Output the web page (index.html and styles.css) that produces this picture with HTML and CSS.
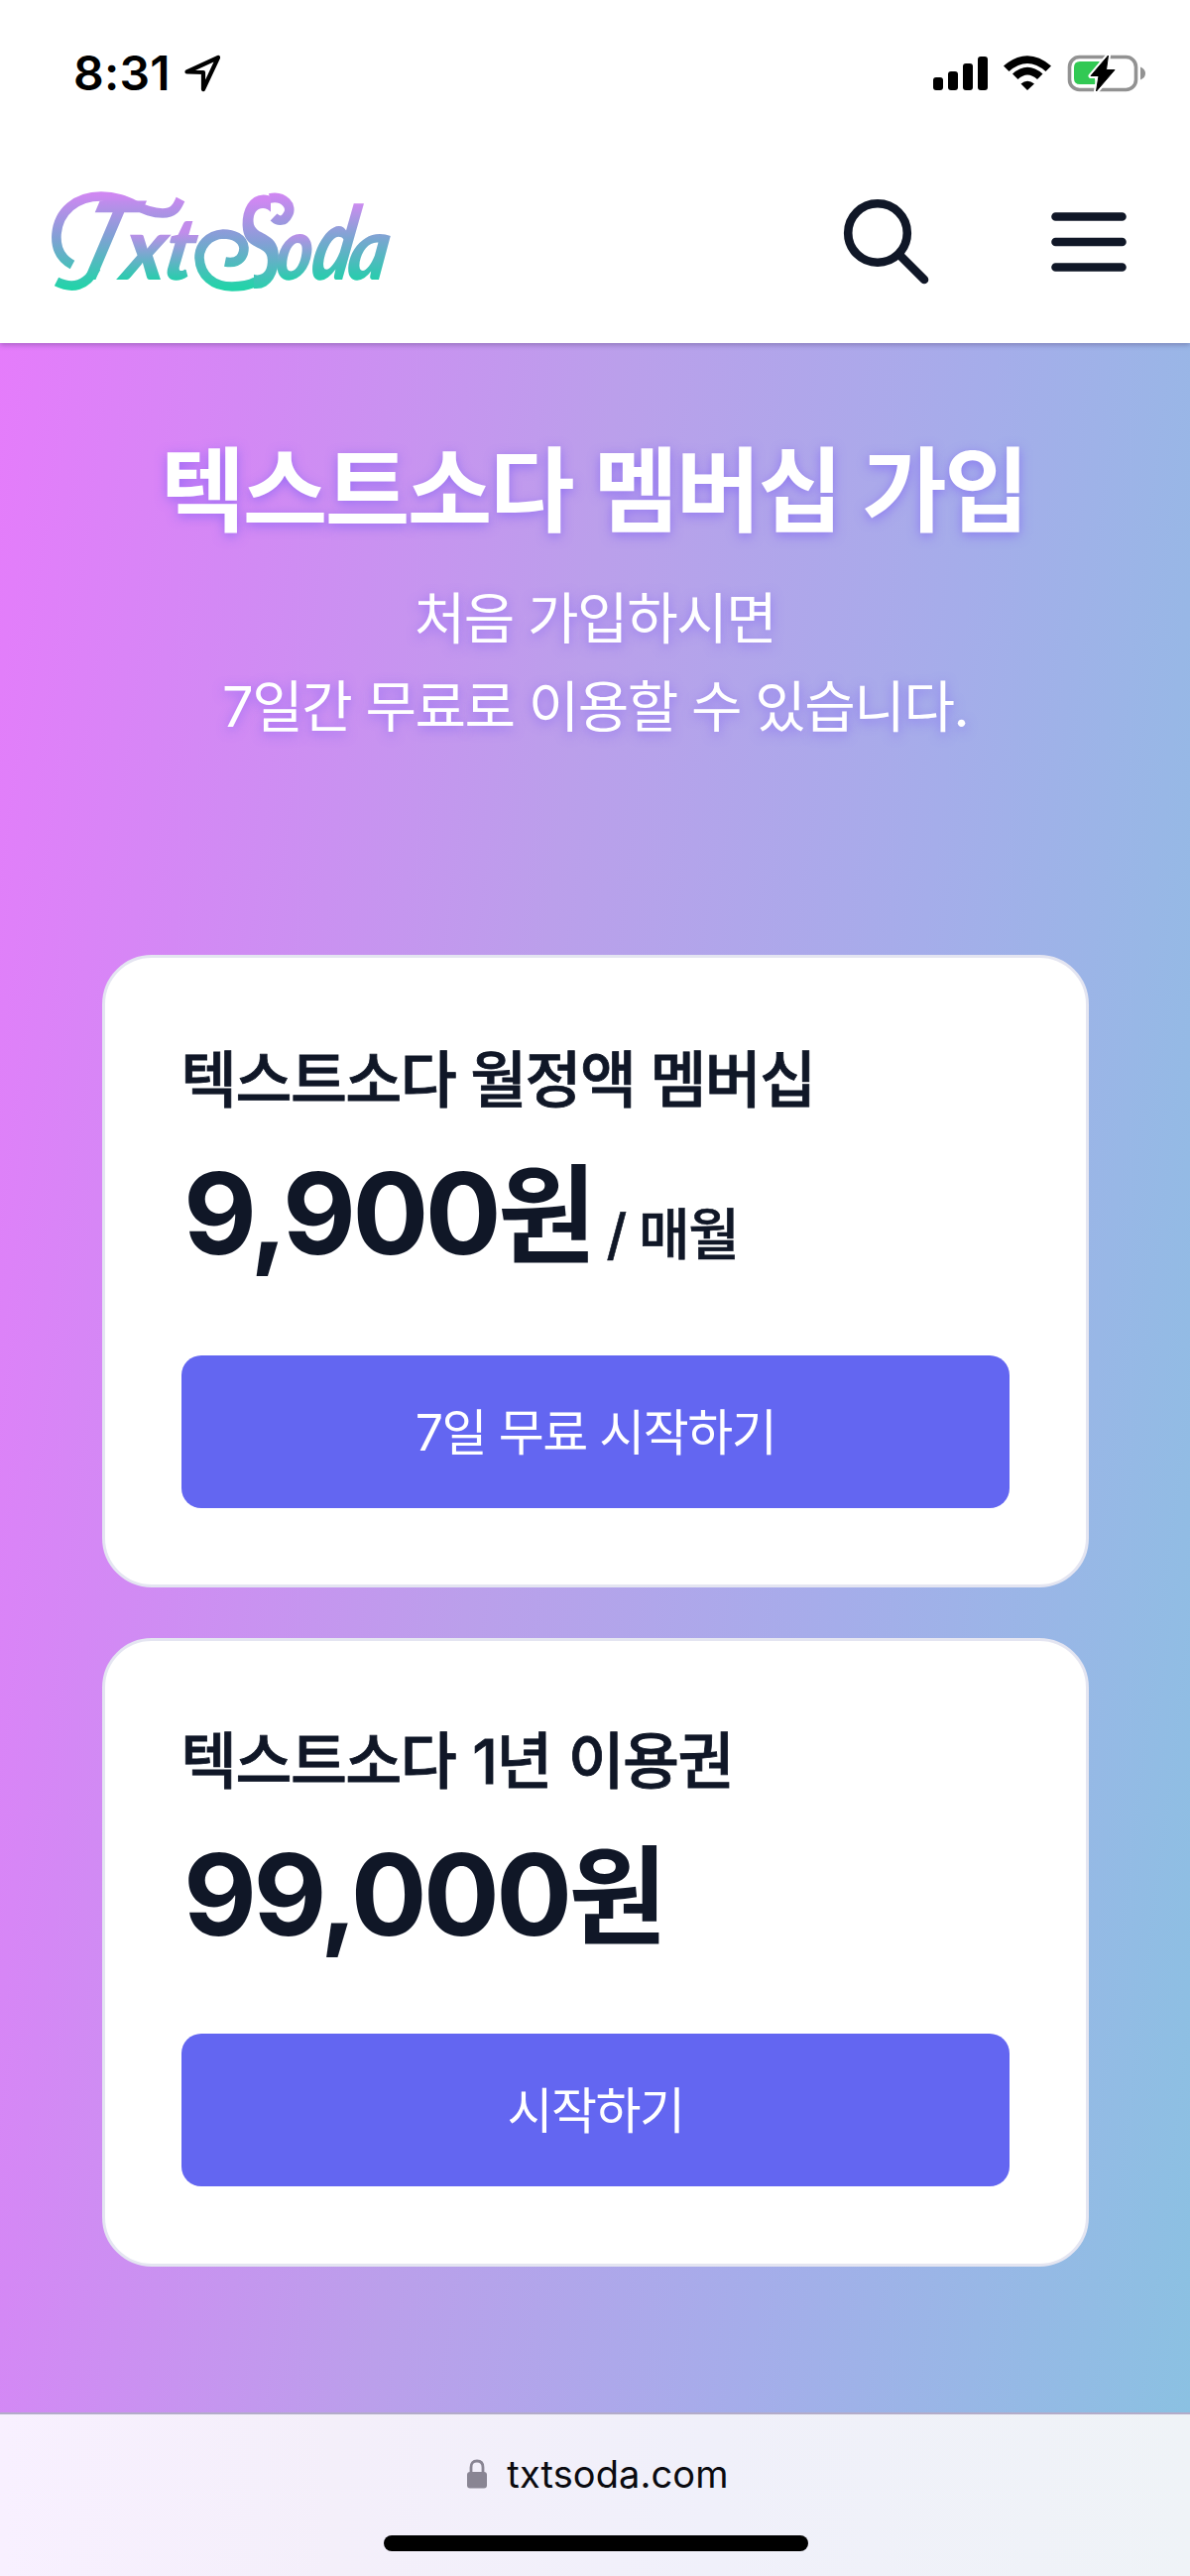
FILE: index.html
```html
<!DOCTYPE html>
<html lang="ko">
<head>
<meta charset="utf-8">
<title>텍스트소다 멤버십 가입</title>
<link rel="stylesheet" href="styles.css">
</head>
<body>
<div class="status">
  <div class="clock"><span class="time">8:31</span>
    <svg width="40" height="40" viewBox="0 0 40 40"><path d="M4.5 18.5 L36 4 L21 36 V19 Z" fill="none" stroke="#000" stroke-width="4.2" stroke-linejoin="round"/></svg>
  </div>
  <svg class="indicators" width="220" height="40" viewBox="0 0 220 40">
    <g><rect x="1" y="24" width="10" height="13" rx="3"/><rect x="16" y="18" width="10" height="19" rx="3"/><rect x="31" y="10" width="10" height="27" rx="3"/><rect x="46" y="3" width="10" height="34" rx="3"/></g>
    <path d="M72 12.500Q96 -8 120 12.500L114.500 18Q96 2 77.500 18ZM81 20.500Q96 7 111.500 20.500L106 26Q96 17 86.500 26ZM89.500 30.500Q96 25 103 30.500L96 37Z"/>
    <rect x="138.500" y="3.500" width="67" height="33" rx="10" fill="none" stroke="#929292" stroke-width="3.600"/>
    <path d="M149 8H169L163 20 165 31H149Q143 31 143 25V14Q143 8 149 8Z" fill="#32c954"/>
    <path d="M210 13.500Q215 15.500 215 20T210 26.500Z" fill="#929292"/>
    <path d="M177.500 2L160 22.500H168L165.500 38 184 16.500H175.500Z" fill="#000" stroke="#fff" stroke-width="5" stroke-linejoin="round"/>
    <path d="M177.500 2L160 22.500H168L165.500 38 184 16.500H175.500Z" fill="#000" stroke="#000" stroke-width="1" stroke-linejoin="round"/>
  </svg>
</div>
<header class="header">
  <svg class="logo" width="370" height="124" viewBox="0 0 370 124" role="img" aria-label="TxtSoda">
    <defs>
      <linearGradient id="sweep" gradientUnits="userSpaceOnUse" x1="0" y1="26" x2="0" y2="120"><stop offset="0" stop-color="#cf87f2"/><stop offset=".45" stop-color="#849fd6"/><stop offset="1" stop-color="#23d3a9"/></linearGradient>
      <linearGradient id="cap" gradientUnits="userSpaceOnUse" x1="0" y1="-88" x2="0" y2="6"><stop offset="0" stop-color="#cf87f2"/><stop offset=".45" stop-color="#849fd6"/><stop offset="1" stop-color="#23d3a9"/></linearGradient>
      <linearGradient id="low" gradientUnits="userSpaceOnUse" x1="0" y1="-48" x2="0" y2="0"><stop offset="0" stop-color="#c28ceb"/><stop offset=".5" stop-color="#74abcd"/><stop offset="1" stop-color="#27cdac"/></linearGradient>
      <linearGradient id="tall" gradientUnits="userSpaceOnUse" x1="0" y1="-78" x2="0" y2="0"><stop offset="0" stop-color="#cf8af1"/><stop offset=".5" stop-color="#75a8cf"/><stop offset="1" stop-color="#27cdac"/></linearGradient>
      <clipPath id="trim"><path d="M200 10H243V60H290V124H226V90H200Z"/></clipPath>
    </defs>
    <g class="swash">
      <path d="M43 97C30 90 26 79 27 66C29 43 47 28 72 28C100 28 112 45 134 45C147 45 149 37 152 31"/>
      <path d="M67 100C57 119 43 122 27 114"/>
      <path d="M197 94C212 97 216 87 216 80C215 70 205 66 195 66C180 67 171 78 171 90C172 108 185 119 204 119C213 119 221 118 228 114"/>
      <path d="M242 30C256 27 266 38 260 47C257 53 251 54 246 49"/>
    </g>
    <g class="letters">
      <text class="cap" transform="translate(39 112) skewX(-18)" font-size="110" textLength="50" lengthAdjust="spacingAndGlyphs">T</text>
      <text class="low" transform="translate(91 112) skewX(-8)" font-size="88" textLength="44" lengthAdjust="spacingAndGlyphs">x</text>
      <text class="low" transform="translate(132 112) skewX(-10)" font-size="88" textLength="31" lengthAdjust="spacingAndGlyphs">t</text>
      <g clip-path="url(#trim)"><text class="cap" transform="translate(210 120) skewX(2)" font-size="128" textLength="46" lengthAdjust="spacingAndGlyphs">S</text></g>
      <text class="low" transform="translate(246 112) skewX(-7)" font-size="88" textLength="37" lengthAdjust="spacingAndGlyphs">o</text>
      <text class="tall" transform="translate(281 112) skewX(-11)" font-size="103" textLength="41" lengthAdjust="spacingAndGlyphs">d</text>
      <text class="tall" transform="translate(318 112) skewX(-9)" font-size="88" textLength="41" lengthAdjust="spacingAndGlyphs">a</text>
    </g>
  </svg>
  <div class="tools">
    <svg width="88" height="88" viewBox="0 0 88 88"><g fill="none" stroke="#101727" stroke-width="8.600" stroke-linecap="round"><circle cx="35" cy="35" r="29.800"/><path d="M57 57L82 82"/></g></svg>
    <svg width="76" height="60" viewBox="0 0 76 60"><path d="M4.500 4.500H71.500M4.500 30H71.500M4.500 55.500H71.500" stroke="#101727" stroke-width="8.600" stroke-linecap="round"/></svg>
  </div>
</header>
<main class="main">
  <h1 class="title">텍스트소다 멤버십 가입</h1>
  <p class="lead">처음 가입하시면<br>7일간 무료로 이용할 수 있습니다.</p>
  <div class="plans">
    <section class="card">
      <h2 class="name">텍스트소다 월정액 멤버십</h2>
      <div class="price"><span class="num">9,900</span><span class="won">원</span><span class="per">/ 매월</span></div>
      <a class="button">7일 무료 시작하기</a>
    </section>
    <section class="card">
      <h2 class="name">텍스트소다 1년 이용권</h2>
      <div class="price"><span class="num">99,000</span><span class="won">원</span></div>
      <a class="button">시작하기</a>
    </section>
  </div>
</main>
<footer class="bar">
  <div class="address">
    <svg width="22" height="30" viewBox="0 0 22 30"><path d="M5 14V8.500Q5 2 11 2T17 8.500V14" fill="none" stroke="#898593" stroke-width="2.800"/><rect x="1" y="13" width="20" height="16.500" rx="3" fill="#898593"/></svg>
    <span>txtsoda.com</span>
  </div>
  <div class="home"></div>
</footer>
</body>
</html>
```
FILE: styles.css
```css
* { box-sizing: border-box; }
body {
  margin: 0;
  width: 1200px;
  height: 2598px;
  display: flex;
  flex-direction: column;
  overflow: hidden;
  background: #fff;
  color: #101727;
  font-family: Inter, "Noto Sans CJK KR", sans-serif;
}
svg { display: block; flex: none; }
h1, h2, p { margin: 0; }
.status {
  height: 150px;
  flex: none;
  padding: 54px 40px 0 74px;
  display: flex;
  justify-content: space-between;
  align-items: flex-start;
  background: #fff;
  position: relative;
  z-index: 2;
}
.clock { display: flex; align-items: center; gap: 12px; height: 40px; }
.time { font-size: 48px; font-weight: 600; line-height: 42px; color: #000; letter-spacing: .2px; }
.header {
  height: 196px;
  flex: none;
  padding: 20px 64px 0 30px;
  display: flex;
  justify-content: space-between;
  align-items: flex-start;
  background: #fff;
  box-shadow: 0 2px 5px rgba(60, 50, 100, .35);
  position: relative;
  z-index: 1;
}
.logo { overflow: visible; }
.swash { fill: none; stroke: url(#sweep); stroke-width: 9.6px; }
.letters text { font-family: Lato, sans-serif; font-style: italic; font-weight: 900; }
.letters .cap { fill: url(#cap); font-weight: 700; }
.letters .low { fill: url(#low); }
.letters .tall { fill: url(#tall); }
.tools { display: flex; align-items: center; gap: 122px; padding-top: 30px; }
.main {
  height: 2087px;
  flex: none;
  padding: 89px 102px 0 103px;
  background: linear-gradient(97deg, #e57cfb 0%, #d488f5 17%, #bb9feb 43%, #a5adea 69%, #8bc1e2 100%);
}
.title {
  font-size: 93px;
  font-weight: 700;
  line-height: 120px;
  letter-spacing: -2.5px;
  word-spacing: 2px;
  margin-left: -4px;
  text-align: center;
  white-space: nowrap;
  color: #fff;
  text-shadow: 0 3px 12px rgba(120, 90, 245, .6);
}
.lead {
  margin-top: 25px;
  height: 180px;
  font-size: 56px;
  font-weight: 400;
  line-height: 89px;
  letter-spacing: -1.5px;
  margin-left: -1px;
  text-align: center;
  white-space: nowrap;
  color: #fff;
  text-shadow: 0 3px 12px rgba(120, 90, 245, .6);
}
.plans { margin-top: 203px; display: flex; flex-direction: column; gap: 51px; }
.card {
  height: 638px;
  padding: 81px 77px 0;
  display: flex;
  flex-direction: column;
  background: #fff;
  border: 3px solid #e4e5f1;
  border-radius: 50px;
}
.card + .card { height: 634px; padding-top: 79px; }
.name {
  font-size: 62px;
  font-weight: 500;
  line-height: 86px;
  letter-spacing: -1.6px;
  white-space: nowrap;
  margin-left: -1px;
  -webkit-text-stroke: .8px #101727;
}
.card + .card .name { word-spacing: 2px; }
.price { height: 130px; margin-top: 26px; display: flex; align-items: baseline; font-weight: 700; line-height: 130px; white-space: nowrap; }
.num { font-size: 114px; letter-spacing: -3.6px; margin-left: 2px; }
.won { font-size: 108px; }
.per { font-size: 56px; font-weight: 500; letter-spacing: -1.5px; margin-left: 10px; -webkit-text-stroke: .6px #101727; }
.button {
  height: 154px;
  margin-top: 78px;
  border-radius: 20px;
  background: #6366f1;
  color: #fff;
  font-size: 50px;
  font-weight: 400;
  line-height: 157px;
  letter-spacing: -1.5px;
  text-align: center;
}
.card + .card .button { margin-top: 75px; }
.bar {
  height: 165px;
  flex: none;
  border-top: 2px solid #b3acc9;
  background: linear-gradient(90deg, #f8f0ff, #f4effa 28%, #f0f0fa 60%, #eff3f7);
  display: flex;
  flex-direction: column;
  align-items: center;
}
.address { height: 60px; margin-top: 30px; padding-left: 5px; display: flex; align-items: center; gap: 19px; color: #0b0b10; font-size: 38px; line-height: 60px; letter-spacing: .1px; }
.home { width: 428px; height: 16px; margin: 32px 0 0 2px; border-radius: 8px; background: #000; }
```
